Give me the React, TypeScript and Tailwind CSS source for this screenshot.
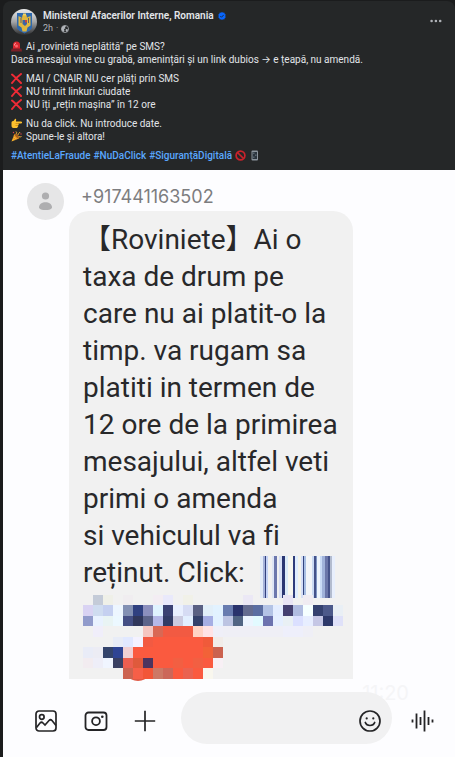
import React from "react"

const MOSAIC_Y = [0, 10, 21, 31, 42, 52, 63, 73, 84]

const mosaic: string[] = [
  "- c4cbd8 eff0e8 - f0edf0 - - f3edf3 e9e9fb - f1f1e8 - - - - - ebe8f5 - - - e8e4f4 - f0ecf2 - - -",
  "d9d3f3 cfdcf0 c5d0f0 edf6ff 8290b3 2f4080 8b8fbd e0f3ff 3b4273 e9f0ff d6dcf4 5a6083 e2eff9 e2f2ff 687caf 29336c 646c90 5b6ea2 b3c3e5 e3edff 444070 b0bce0 f5ffff 34416f 4c598a e9eff5",
  "919bcb e9f2ff e9f4f4 ecf8ff 444f84 30375b 5d648a b5b8e7 323c66 cbcbe0 e2efff 33406b a6aee3 e2f1ff bcc4e2 516583 ecf5ff e2faff 6c73af e5efff e9f0f4 dbe0ff e7eeff c5c7e5 2d3869 dfe1f9",
  "- f0eefa - - - - f5c6c0 d96854 f25a42 f25a42 f25a42 ffd3c5 ffe3e5 efeff8 efeff6 efeff6 efeff6 efeff6 efeff6 efeff6 eeeffb eeeffb efeff6 - - -",
  "- - - e8ecf7 e1e8ff f4f2ff f25a42 fa5a3f fa5a3f fa5a3f fa5a3f fa5a3f f05a3a f1ece8 - - - - - - - - - - - -",
  "e9ecf7 ececf4 34446c 2f4494 f0d0d3 fa5a3f fa5a3f fa5a3f fa5a3f fa5a3f fa5a3f fa5a3f f26238 cb624f - - - - - - - - - - - -",
  "f2ecf0 eeeef8 f0f5ff 3a4063 ec5f50 df5a3c 4b345f fa5a3f fa5a3f f25f42 fa5a3f f25f42 fa5a3f f8f0f5 - - - - - - - - - - - -",
  "- - - - cc6350 f65f48 f25638 cd7865 cc6759 fa5a3f ea6250 fa5a3f f9f7ee - - - - - - - - - - - - -",
]

const stripes: [number, number, string][] = [
  [0, 3, "#e3ebf8"], [3, 2, "#a5b2da"], [5, 1, "#33407d"], [6, 2, "#c5d3f5"], [12, 2, "#dfe6f5"],
  [14, 3, "#6d78ad"], [19, 3, "#d8e0f5"], [22, 3, "#2a3672"], [25, 3, "#dcebf8"], [28, 5, "#f7f7ef"],
  [33, 2, "#2f3c7a"], [35, 3, "#e0edfd"], [38, 3, "#f3f3ea"], [41, 2, "#d5dff7"], [43, 1, "#33457f"],
  [44, 2, "#a9bfe3"], [46, 6, "#f2f5f8"], [52, 2, "#cbdaf3"], [54, 2, "#445289"], [56, 1, "#7f95c2"],
  [57, 3, "#eef5fc"], [60, 2, "#c9dbf6"], [62, 3, "#a0b2da"], [65, 3, "#6a76a9"], [68, 2, "#45528a"],
  [70, 2, "#b3bccf"], [72, 3, "#e8effd"],
]

const smsLines = [
  "【Roviniete】Ai o",
  "taxa de drum pe",
  "care nu ai platit-o la",
  "timp. va rugam sa",
  "platiti in termen de",
  "12 ore de la primirea",
  "mesajului, altfel veti",
  "primi o amenda",
  "si vehiculul va fi",
]

const Siren = () => (
  <svg viewBox="0 0 22 22" className="h-[11px] w-[11px] shrink-0">
    <path d="M4 16V8a7 7 0 0 1 14 0v8z" fill="#d9262f" />
    <path d="M7 9a4 4 0 0 1 3-5" stroke="#ff9a9a" strokeWidth="2" fill="none" />
    <circle cx="11" cy="10" r="3" fill="#f9656a" />
    <path d="M1 15h20l1 6H0z" fill="#7b2028" />
  </svg>
)

const Cross = () => (
  <svg viewBox="0 0 22 22" className="h-[11px] w-[11px] shrink-0">
    <path d="M2 3c5 4 10 9 18 17M20 2C13 7 7 13 2 20" stroke="#ee2b36" strokeWidth="4" strokeLinecap="round" fill="none" />
  </svg>
)

const Point = () => (
  <svg viewBox="0 0 22 22" className="h-[11px] w-[11px] shrink-0">
    <path d="M1 9c0-2 2-3 4-3l3-4c2-1 3 1 2 3v2h10c3 0 3 4 0 4h-6c2 1 2 3 0 4 1 2 0 3-1 3 0 2-1 2-3 2H5c-3 0-4-2-4-5z" fill="#fcc02e" />
    <path d="M9 11h6M9 15h5" stroke="#c98211" strokeWidth="1.4" />
  </svg>
)

const Party = () => (
  <svg viewBox="0 0 22 22" className="h-[11px] w-[11px] shrink-0">
    <path d="M1 21 7 6l9 9z" fill="#fbb42c" />
    <path d="m4 13 6 5M6 9l7 7" stroke="#d6791d" strokeWidth="1.6" />
    <ellipse cx="12" cy="10" rx="2.5" ry="6.5" transform="rotate(-45 12 10)" fill="#a8601d" />
    <path d="M10 6c2-1 2-3 0-5M14 8c0-4 3-3 4-6" stroke="#f2b33b" strokeWidth="2" fill="none" />
    <path d="M15 12c2-2 4 1 6-1" stroke="#f2b33b" strokeWidth="2" fill="none" />
    <circle cx="5" cy="3" r="1.4" fill="#e4434f" />
    <circle cx="20" cy="6" r="1.4" fill="#e4434f" />
  </svg>
)

const Forbidden = () => (
  <svg viewBox="0 0 22 22" className="h-[11px] w-[11px] shrink-0">
    <circle cx="11" cy="11" r="8.8" stroke="#c9222b" strokeWidth="3.4" fill="none" />
    <path d="m5 5 12 12" stroke="#c9222b" strokeWidth="3.4" />
  </svg>
)

const Phone = () => (
  <svg viewBox="0 0 22 22" className="h-[11px] w-[11px] shrink-0">
    <rect x="5" y="1" width="13" height="20" rx="2" fill="#8b949c" />
    <rect x="7" y="4" width="9" height="14" fill="#2b343d" />
    <path d="M8 5h3v3H8zM12 9h3v3h-3zM8 13h3v3H8z" fill="#59656f" />
  </svg>
)

const Crest = () => (
  <svg viewBox="0 0 52 52" className="h-[26px] w-[26px] shrink-0" role="img" aria-label="Ministerul Afacerilor Interne">
    <defs>
      <linearGradient id="ring" x1="0" y1="0" x2="0" y2="1">
        <stop offset="0" stopColor="#eceded" />
        <stop offset="0.5" stopColor="#a2a4a6" />
        <stop offset="1" stopColor="#2c2d2f" />
      </linearGradient>
    </defs>
    <circle cx="26" cy="26" r="26" fill="url(#ring)" />
    <path d="M12 8h30v28c0 6-8 9-15 13-7-4-15-7-15-13z" fill="#2e69ae" />
    <path d="M23 12h8l1 5 7-3v19l-6 4-2 8h-8l-2-8-6-4V14l7 4z" fill="#dfb63e" />
    <path d="M20 18v10M35 18v10" stroke="#5c6273" strokeWidth="2" />
    <path d="M23 22h9v8l-4 4-5-4z" fill="#3b64a6" />
    <path d="M28 22h4v5h-4z" fill="#c9433d" />
    <path d="M24 9h6v4h-6z" fill="#f0d264" />
  </svg>
)

const Barcode = () => (
  <svg viewBox="0 0 76 42" className="mt-0.5 h-[42px] w-[76px] shrink-0" shapeRendering="crispEdges">
    {stripes.map(([x, w, fill]) => (
      <rect key={x} x={x} y="0" width={w} height="42" fill={fill} />
    ))}
  </svg>
)

const Mosaic = () => (
  <svg viewBox="0 0 260 87" className="h-[87px] w-[260px]" shapeRendering="crispEdges">
    <ellipse cx="55" cy="81" rx="9" ry="5" fill="#e05a46" shapeRendering="auto" />
    {mosaic.map((row, r) =>
      row.split(" ").map((c, i) =>
        c === "-" ? null : (
          <rect key={`${r}-${i}`} x={i * 10} y={MOSAIC_Y[r]} width="10" height={MOSAIC_Y[r + 1] - MOSAIC_Y[r]} fill={`#${c}`} />
        )
      )
    )}
  </svg>
)

const Line: React.FC<{ icon?: React.ReactNode; children: React.ReactNode }> = ({ icon, children }) => (
  <p className="flex items-center gap-1">
    {icon}
    <span>{children}</span>
  </p>
)

const PostHeader = () => (
  <header className="flex items-start">
    <Crest />
    <div className="ml-[6px] flex-1">
      <h1 className="flex items-center gap-1 text-[10px] leading-[13px] font-semibold">
        <a href="#page">Ministerul Afacerilor Interne, Romania</a>
        <svg viewBox="0 0 16 16" className="h-2 w-2" role="img" aria-label="Verified">
          <path d="m8 0 2 1.3 2.5-.2.8 2.4 2 1.5-.7 3 .7 3-2 1.3-.8 2.5-2.5-.1L8 16l-2-1.3-2.5.1-.8-2.5-2-1.3.7-3-.7-3 2-1.5.8-2.4 2.5.2z" fill="#0866ff" />
          <path d="m4.5 8 2.5 2.5 4.5-4.800" stroke="#1c2733" strokeWidth="1.8" fill="none" />
        </svg>
      </h1>
      <p className="flex items-center gap-[3px] text-[9px] leading-[13px] text-[#b0b3b8]">
        <span>2h</span>
        <span>·</span>
        <svg viewBox="0 0 16 16" className="h-2 w-2" role="img" aria-label="Public">
          <circle cx="8" cy="8" r="7.2" fill="none" stroke="#b0b3b8" strokeWidth="1.5" />
          <path d="M2 4c3-3 6-3 8-2L8 5l1 2-3 1 1 4-2 2C1 12 0 8 2 4zM10 8l4 1c0 3-2 4-3 5l-2-3z" fill="#b0b3b8" />
        </svg>
      </p>
    </div>
    <button type="button" aria-label="More" className="mt-[10px] mr-[5px]">
      <svg viewBox="0 0 12 4" className="h-1 w-3" fill="#b0b3b8">
        <circle cx="1.6" cy="2" r="1.3" />
        <circle cx="5.9" cy="2" r="1.3" />
        <circle cx="10.2" cy="2" r="1.3" />
      </svg>
    </button>
  </header>
)

const PostText = () => (
  <div className="mt-[5px] flex flex-col gap-[6px] text-[10px] leading-[13px]">
    <div>
      <Line icon={<Siren />}>Ai „rovinietă neplătită” pe SMS?</Line>
      <Line>Dacă mesajul vine cu grabă, amenințări și un link dubios → e țeapă, nu amendă.</Line>
    </div>
    <div>
      <Line icon={<Cross />}>MAI / CNAIR NU cer plăți prin SMS</Line>
      <Line icon={<Cross />}>NU trimit linkuri ciudate</Line>
      <Line icon={<Cross />}>NU îți „rețin mașina” în 12 ore</Line>
    </div>
    <div>
      <Line icon={<Point />}>Nu da click. Nu introduce date.</Line>
      <Line icon={<Party />}>Spune-le și altora!</Line>
    </div>
    <p className="flex items-center gap-[3px] font-medium text-[#5aa7ff]">
      <a href="#atentielafraude">#AtentieLaFraude</a>
      <a href="#nudaclick">#NuDaClick</a>
      <a href="#sigurantadigitala">#SiguranțăDigitală</a>
      <Forbidden />
      <Phone />
    </p>
  </div>
)

const Composer = () => (
  <footer className="relative flex items-center pr-5 pb-[13px] pl-8 text-[#242426]">
    <button type="button" aria-label="Gallery" className="mt-[6px]">
      <svg viewBox="0 0 22 22" className="h-[22px] w-[22px]" fill="none" stroke="currentColor" strokeWidth="1.7">
        <rect x="1" y="1" width="20" height="20" rx="3" />
        <circle cx="6.8" cy="7" r="2.3" />
        <path d="m1.500 17.500 3.500-4.500c1-1 2-1 3 0l2 2 4-4.500c1-1 2-1 3 0l4 5" />
      </svg>
    </button>
    <button type="button" aria-label="Camera" className="mt-[6px] ml-[27px]">
      <svg viewBox="0 0 24 22" className="h-[22px] w-6" fill="none" stroke="currentColor" strokeWidth="1.8">
        <rect x="1.5" y="2.5" width="21" height="17.5" rx="3" />
        <circle cx="12" cy="11.2" r="3.9" />
        <circle cx="18.3" cy="6.7" r="1.3" fill="currentColor" stroke="none" />
      </svg>
    </button>
    <button type="button" aria-label="Add" className="mt-[6px] ml-[26px]">
      <svg viewBox="0 0 22 22" className="h-[22px] w-[22px]" fill="none" stroke="currentColor" strokeWidth="1.7">
        <path d="M11 .8v20.4M.8 11h20.4" />
      </svg>
    </button>
    <div className="ml-[25px] flex h-[52px] min-w-0 flex-1 items-center rounded-full bg-[#f1f1f2] pr-[11px] pl-6">
      <input type="text" aria-label="Message" className="min-w-0 flex-1 bg-transparent text-base outline-none" />
      <button type="button" aria-label="Emoji" className="mt-[6px]">
        <svg viewBox="0 0 22 22" className="h-[22px] w-[22px]" fill="none" stroke="currentColor" strokeWidth="1.7">
          <circle cx="11" cy="11" r="10" />
          <path d="M6.3 12.5c1.5 4 7.9 4 9.4 0" strokeLinecap="round" />
          <circle cx="7.7" cy="8.4" r="1.1" fill="currentColor" stroke="none" />
          <circle cx="14.3" cy="8.4" r="1.1" fill="currentColor" stroke="none" />
        </svg>
      </button>
    </div>
    <button type="button" aria-label="Voice message" className="mt-[6px] ml-[19px]">
      <svg viewBox="0 0 24 22" className="h-[22px] w-6" fill="none" stroke="currentColor" strokeWidth="1.8">
        <path d="M1.5 9.5v3M5.5 3.500v15M9.500 7v8M13.500 .5v21M17.500 7v8M21.500 9.500v3" />
      </svg>
    </button>
  </footer>
)

export default function App() {
  return (
    <div className="min-h-screen bg-[#1b1c1d] pt-px pl-[3px]">
      <article className="flex min-h-[calc(100vh-1px)] flex-col rounded-t-lg bg-[#252728]">
        <div className="px-2 pt-2 pb-2 font-['Roboto','Inter',sans-serif] text-[#e2e5e9]">
          <PostHeader />
          <PostText />
        </div>
        <section className="flex flex-1 flex-col bg-[#fdfdff] pt-[13px] font-['Inter',sans-serif]">
          <div className="flex pl-6">
            <svg viewBox="0 0 37 37" className="h-[37px] w-[37px] shrink-0">
              <circle cx="18.5" cy="18.5" r="18.5" fill="#e6e6e7" />
              <circle cx="18.5" cy="13" r="3.6" fill="#aeaeb0" />
              <path d="M12 24.5c0-7 13-7 13 0 0 3.4-13 3.4-13 0z" fill="#aeaeb0" />
            </svg>
            <div className="ml-[5px] flex-1">
              <p className="pl-3 text-lg leading-[28px] text-[#7d7d80]">+917441163502</p>
              <div className="w-fit min-w-[284px] rounded-t-[20px] bg-[#f1f1f1] pt-[10px] pl-[14px] font-['Roboto','Noto_Sans_CJK_SC',sans-serif] text-[28px] leading-[37px] text-[#28282a] [font-variant-ligatures:none]">
                {smsLines.map((line) => (
                  <p key={line} className="whitespace-nowrap">{line}</p>
                ))}
                <div className="flex h-[41px] gap-[15px]">
                  <p className="whitespace-nowrap">reținut. Click:</p>
                  <Barcode />
                </div>
                <div className="h-[84px]">
                  <Mosaic />
                </div>
              </div>
            </div>
          </div>
          <p className="mt-[3px] -mb-[12px] pr-[46px] text-right text-xl leading-[22px] text-[#f5f5f7]">11:20</p>
          <Composer />
        </section>
      </article>
    </div>
  )
}
